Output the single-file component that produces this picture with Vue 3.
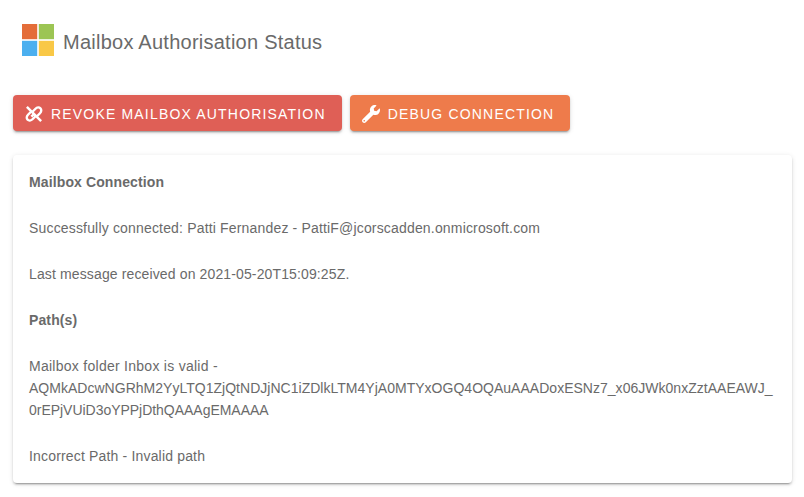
<template>
  <div class="page">
    <div class="header">
      <svg class="logo" viewBox="0 0 32 32" aria-hidden="true">
        <rect x="0" y="0" width="15.2" height="15.2" fill="#e46d39" />
        <rect x="16.8" y="0" width="15.2" height="15.2" fill="#9cc554" />
        <rect x="0" y="16.8" width="15.2" height="15.2" fill="#4bafef" />
        <rect x="16.8" y="16.8" width="15.2" height="15.2" fill="#f9c846" />
      </svg>
      <h1 class="title">Mailbox Authorisation Status</h1>
    </div>

    <div class="actions">
      <button class="btn revoke">
        <svg class="icon" viewBox="0 0 24 24" aria-hidden="true">
          <g fill="none" stroke="#fff" stroke-width="3.2">
            <path d="M2.5 2.5L21.5 21.5" />
            <path d="M10 9L14 5C16 3 19 3 20.6 4.4C22.2 6 22 9 20 11L16 15" />
            <path d="M14 15L10 19C8 21 5 21 3.4 19.6C1.8 18 2 15 4 13L8 9" />
            <path d="M8.5 15.5L12 12" />
          </g>
        </svg>
        Revoke Mailbox Authorisation
      </button>
      <button class="btn debug">
        <svg class="icon" viewBox="0 0 512 512" aria-hidden="true">
          <path fill="#fff" d="M507.73 109.1c-2.24-9.03-13.54-12.09-20.12-5.51l-74.36 74.36-67.88-11.31-11.31-67.88 74.36-74.36c6.62-6.62 3.43-17.9-5.66-20.16-47.38-11.74-99.55.91-136.58 37.93-39.64 39.64-50.55 97.1-34.05 147.2L18.74 402.76c-24.99 24.99-24.99 65.51 0 90.5 24.99 24.99 65.51 24.99 90.5 0l213.21-213.21c50.12 16.71 107.47 5.68 147.37-34.22 37.07-37.07 49.7-89.32 37.91-136.73zM64 472c-13.25 0-24-10.75-24-24 0-13.26 10.75-24 24-24s24 10.74 24 24c0 13.25-10.75 24-24 24z" />
        </svg>
        Debug Connection
      </button>
    </div>

    <div class="card">
      <p class="strong">Mailbox Connection</p>
      <p>Successfully connected: Patti Fernandez - PattiF@jcorscadden.onmicrosoft.com</p>
      <p class="tight">Last message received on 2021-05-20T15:09:25Z.</p>
      <p class="strong">Path(s)</p>
      <p><span class="loose">Mailbox folder Inbox is valid -</span><br /><span class="token">AQMkADcwNGRhM2YyLTQ1ZjQtNDJjNC1iZDlkLTM4YjA0MTYxOGQ4OQAuAAADoxESNz7_x06JWk0nxZztAAEAWJ_</span><br /><span class="token-end">0rEPjVUiD3oYPPjDthQAAAgEMAAAA</span></p>
      <p>Incorrect Path - Invalid path</p>
    </div>
  </div>
</template>

<script setup>
</script>

<style>
body {
  background: #fff;
}
</style>

<style scoped>
.page {
  padding: 24px 12px 14px 13px;
  font-family: "Liberation Sans", Arial, sans-serif;
  color: #6a6a6a;
}

.header {
  display: flex;
  align-items: center;
  gap: 9px;
  height: 32px;
  margin-left: 9px;
}

.logo {
  width: 32px;
  height: 32px;
  filter: blur(0.5px);
}

.title {
  margin: 4px 0 0;
  font-size: 20px;
  font-weight: 400;
  letter-spacing: 0.25px;
  line-height: 32px;
}

.actions {
  display: flex;
  gap: 8px;
  margin-top: 39px;
}

.btn {
  display: flex;
  align-items: center;
  height: 36px;
  padding: 1px 16px 0 12px;
  border: none;
  border-radius: 4px;
  color: #fff;
  font-family: inherit;
  font-size: 14px;
  font-weight: 500;
  letter-spacing: 1.18px;
  text-transform: uppercase;
  box-shadow: 0 3px 1px -2px rgba(0, 0, 0, 0.2), 0 2px 2px 0 rgba(0, 0, 0, 0.14), 0 1px 5px 0 rgba(0, 0, 0, 0.12);
}

.revoke {
  background: #df5f56;
}

.debug {
  background: #ee7b4b;
}

.icon {
  width: 18px;
  height: 18px;
  margin-right: 8px;
}

.card {
  margin-top: 24px;
  padding: 16px;
  background: #fff;
  border-radius: 4px;
  font-size: 14px;
  line-height: 22px;
  letter-spacing: 0.17px;
  box-shadow: 0 3px 1px -2px rgba(0, 0, 0, 0.2), 0 2px 2px 0 rgba(0, 0, 0, 0.14), 0 1px 5px 0 rgba(0, 0, 0, 0.12);
}

.card p {
  margin: 0 0 24px;
  overflow-wrap: anywhere;
}

.card p:last-child {
  margin-bottom: 0;
}

.strong {
  font-weight: 700;
  letter-spacing: 0.12px;
}

.tight {
  letter-spacing: 0.13px;
}

.loose {
  letter-spacing: 0.27px;
}

.token {
  letter-spacing: 0.02px;
}

.token-end {
  letter-spacing: -0.03px;
}
</style>
